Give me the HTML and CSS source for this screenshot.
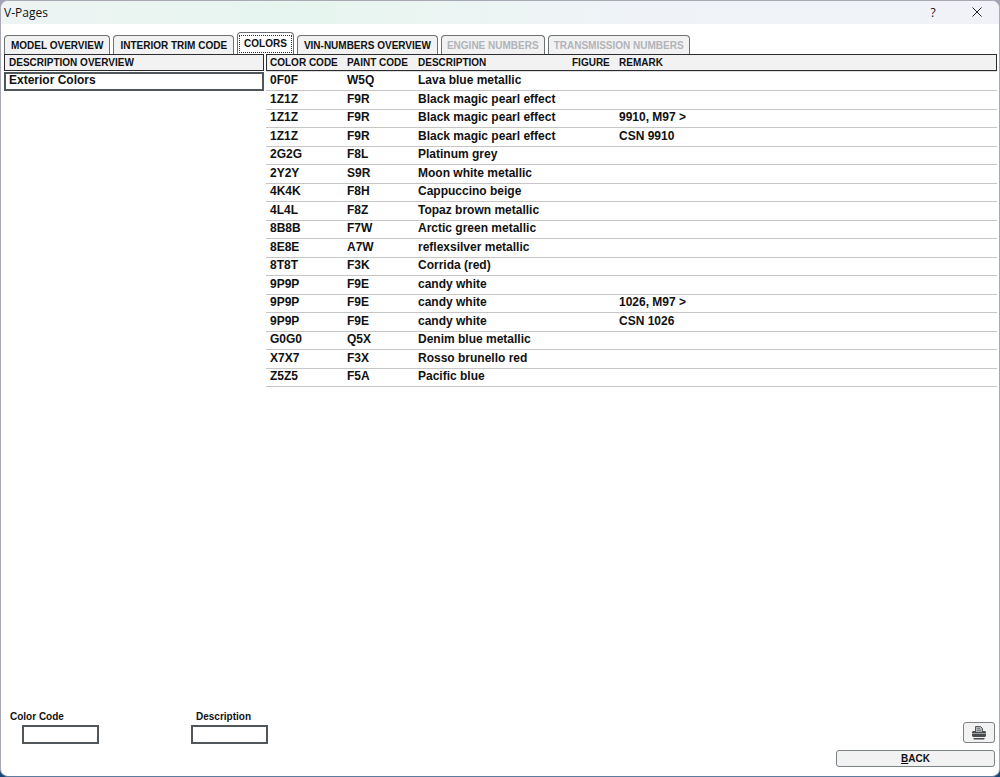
FILE: index.html
```html
<!DOCTYPE html>
<html lang="en">

<head>
    <meta charset="UTF-8" />
    <meta name="viewport" content="width=device-width, initial-scale=1.0" />
    <title>V-Pages</title>
    <link rel="stylesheet" href="styles.css">
</head>

<body>
    <div class="window">
        <header class="titlebar">
            <h1>V-Pages</h1>
            <button class="win-btn" title="Help">?</button>
            <button class="win-btn" title="Close">
                <svg width="10" height="10" viewBox="0 0 10 10"><path d="M0.5 0.5 L9.5 9.5 M9.5 0.5 L0.5 9.5" /></svg>
            </button>
        </header>

        <nav class="tabs">
            <button class="tab">MODEL OVERVIEW</button>
            <button class="tab">INTERIOR TRIM CODE</button>
            <button class="tab active"><span>COLORS</span></button>
            <button class="tab">VIN-NUMBERS OVERVIEW</button>
            <button class="tab" disabled>ENGINE NUMBERS</button>
            <button class="tab" disabled>TRANSMISSION NUMBERS</button>
        </nav>

        <main class="panels">
            <section class="overview">
                <h2>DESCRIPTION OVERVIEW</h2>
                <button class="overview-item">Exterior Colors</button>
            </section>

            <section class="colors">
                <table>
                    <colgroup>
                        <col class="col-color">
                        <col class="col-paint">
                        <col class="col-desc">
                        <col class="col-figure">
                        <col>
                    </colgroup>
                    <thead>
                        <tr>
                            <th>COLOR CODE</th>
                            <th>PAINT CODE</th>
                            <th>DESCRIPTION</th>
                            <th>FIGURE</th>
                            <th>REMARK</th>
                        </tr>
                    </thead>
                    <tbody>
                        <tr><td>0F0F</td><td>W5Q</td><td>Lava blue metallic</td><td></td><td></td></tr>
                        <tr><td>1Z1Z</td><td>F9R</td><td>Black magic pearl effect</td><td></td><td></td></tr>
                        <tr><td>1Z1Z</td><td>F9R</td><td>Black magic pearl effect</td><td></td><td>9910, M97 &gt;</td></tr>
                        <tr><td>1Z1Z</td><td>F9R</td><td>Black magic pearl effect</td><td></td><td>CSN 9910</td></tr>
                        <tr><td>2G2G</td><td>F8L</td><td>Platinum grey</td><td></td><td></td></tr>
                        <tr><td>2Y2Y</td><td>S9R</td><td>Moon white metallic</td><td></td><td></td></tr>
                        <tr><td>4K4K</td><td>F8H</td><td>Cappuccino beige</td><td></td><td></td></tr>
                        <tr><td>4L4L</td><td>F8Z</td><td>Topaz brown metallic</td><td></td><td></td></tr>
                        <tr><td>8B8B</td><td>F7W</td><td>Arctic green metallic</td><td></td><td></td></tr>
                        <tr><td>8E8E</td><td>A7W</td><td>reflexsilver metallic</td><td></td><td></td></tr>
                        <tr><td>8T8T</td><td>F3K</td><td>Corrida (red)</td><td></td><td></td></tr>
                        <tr><td>9P9P</td><td>F9E</td><td>candy white</td><td></td><td></td></tr>
                        <tr><td>9P9P</td><td>F9E</td><td>candy white</td><td></td><td>1026, M97 &gt;</td></tr>
                        <tr><td>9P9P</td><td>F9E</td><td>candy white</td><td></td><td>CSN 1026</td></tr>
                        <tr><td>G0G0</td><td>Q5X</td><td>Denim blue metallic</td><td></td><td></td></tr>
                        <tr><td>X7X7</td><td>F3X</td><td>Rosso brunello red</td><td></td><td></td></tr>
                        <tr><td>Z5Z5</td><td>F5A</td><td>Pacific blue</td><td></td><td></td></tr>
                    </tbody>
                </table>
            </section>
        </main>

        <footer class="footer">
            <form class="filters">
                <div class="field">
                    <label for="color-code">Color Code</label>
                    <input type="text" id="color-code" />
                </div>
                <div class="field field-desc">
                    <label for="description">Description</label>
                    <input type="text" id="description" />
                </div>
            </form>
            <div class="actions">
                <button class="print" title="Print">
                    <svg width="14" height="14" viewBox="0 0 14 14">
                        <path class="paper" d="M3.5 6.5 V0.5 H8.5 L10.5 2.5 V6.5 Z" />
                        <path class="line" d="M5 2.5 H8 M5 4.5 H9" />
                        <path class="body" d="M0 6 L1 5 H3 V6 H11 V5 H13 L14 6 V7 H0 Z" />
                        <path class="body" d="M0 7.5 H14 V10 L13 11 H1 L0 10 Z" />
                        <path class="body" d="M1.5 12 H12.5 V13 L12 13.5 H2 L1.5 13 Z" />
                    </svg>
                </button>
                <button class="back"><u>B</u>ACK</button>
            </div>
        </footer>
    </div>
</body>

</html>
```
FILE: styles.css
```css
:root {
    --ink: #111;
    --panel: #f2f2f2;
    --border: #2b2b30;
    --field: #50565a;
    --button: #7b8285;
    --line: #c6c6c6;
}

* {
    box-sizing: border-box;
}

body {
    margin: 0;
    background: linear-gradient(#a3a1b5 0, #a3a1b5 20px, #c4c4c4 30px, #c4c4c4 calc(100vh - 24px), #174577 calc(100vh - 20px));
    font-family: "Liberation Sans", Arial, sans-serif;
    font-size: 10px;
    font-weight: 700;
    color: var(--ink);
}

button,
input {
    font: inherit;
    color: inherit;
    margin: 0;
    padding: 0;
}

.window {
    display: flex;
    flex-direction: column;
    min-height: 100vh;
    background: #fff;
    border: 1px solid #a9a9b4;
    border-bottom-color: #5d7b9c;
    border-radius: 8px;
    overflow: hidden;
}

/* Title bar */
.titlebar {
    display: flex;
    align-items: center;
    height: 23px;
    padding-left: 3px;
    background: linear-gradient(90deg, #edf4f3, #e6f5ef 30%, #eaf5f1 40%, #eff3f7 62%, #f0f2f7);
}

.titlebar h1 {
    flex: 1;
    margin: 0;
    font: 400 12px "Open Sans", "Noto Sans", sans-serif;
}

.win-btn {
    width: 44px;
    height: 23px;
    border: none;
    background: transparent;
    font: 400 12px "Open Sans", "Noto Sans", sans-serif;
}

.win-btn path {
    fill: none;
    stroke: #222;
}

/* Tabs */
.tabs {
    display: flex;
    align-items: flex-end;
    gap: 3px;
    margin-top: 8px;
    padding: 0 3px;
}

.tab {
    height: 19px;
    padding: 1px 6px 0;
    border: 1px solid #6c7174;
    border-bottom: none;
    border-radius: 4px 4px 0 0;
    background: var(--panel);
    white-space: nowrap;
}

.tab:disabled {
    padding: 1px 5px 0;
    color: #b0b4b9;
}

.tab.active {
    height: 22px;
    padding: 1px;
    background: #fff;
}

.tab.active span {
    display: block;
    height: 18px;
    padding: 0 4px;
    border: 1px dotted #333;
    line-height: 16px;
}

/* Panels */
.panels {
    display: flex;
    flex: 1;
    gap: 2px;
    padding: 0 2px 0 3px;
}

.overview {
    flex: 0 0 260px;
}

.overview h2,
.colors th {
    height: 17px;
    margin: 0;
    padding: 0 4px;
    background: var(--panel);
    font-size: 10px;
    line-height: 15px;
    text-align: left;
    white-space: nowrap;
}

.overview h2 {
    border: 1px solid var(--border);
}

.overview-item {
    display: block;
    width: 100%;
    height: 19px;
    margin-top: 1px;
    padding: 0 3px 2px;
    border: 2px solid var(--field);
    background: #fff;
    font-size: 12px;
    line-height: 13px;
    text-align: left;
}

.colors {
    flex: 1;
}

table {
    width: 100%;
    table-layout: fixed;
    border-spacing: 0;
}

.col-color {
    width: 77px;
}

.col-paint {
    width: 71px;
}

.col-desc {
    width: 154px;
}

.col-figure {
    width: 47px;
}

.colors th {
    border: solid var(--border);
    border-width: 1px 0;
}

.colors th:first-child {
    border-left-width: 1px;
    padding-left: 3px;
}

.colors th:last-child {
    border-right-width: 1px;
}

.colors td {
    height: 18px;
    padding: 0 4px 2px;
    border-bottom: 1px solid var(--line);
    font-size: 12px;
    line-height: 15px;
    white-space: nowrap;
}

.colors tr:nth-child(even) td {
    height: 19px;
}

.colors tbody tr:first-child td {
    height: 20px;
    border-top: 1px solid #ddd;
}

/* Footer */
.footer {
    display: flex;
    justify-content: space-between;
    align-items: flex-end;
    padding: 0 4px 9px 9px;
}

.filters {
    display: flex;
    gap: 92px;
    padding-bottom: 23px;
}

.field {
    display: flex;
    flex-direction: column;
    gap: 2px;
}

.field label {
    line-height: 12px;
}

.field input {
    width: 77px;
    height: 19px;
    margin-left: 12px;
    border: 2px solid var(--field);
    background: #fff;
}

.field-desc label {
    padding-left: 5px;
}

.field-desc input {
    margin-left: 0;
}

.actions {
    display: flex;
    flex-direction: column;
    align-items: flex-end;
    gap: 7px;
}

.actions button {
    border: 1px solid var(--button);
    border-radius: 3px;
    background: var(--panel);
}

.print {
    display: flex;
    align-items: center;
    justify-content: center;
    width: 32px;
    height: 21px;
}

.print .paper {
    fill: #b0b4b6;
    stroke: #555a5d;
}

.print .line {
    stroke: #777c7f;
}

.print .body {
    fill: #484d50;
}

.back {
    width: 159px;
    height: 17px;
    line-height: 14px;
}
```
